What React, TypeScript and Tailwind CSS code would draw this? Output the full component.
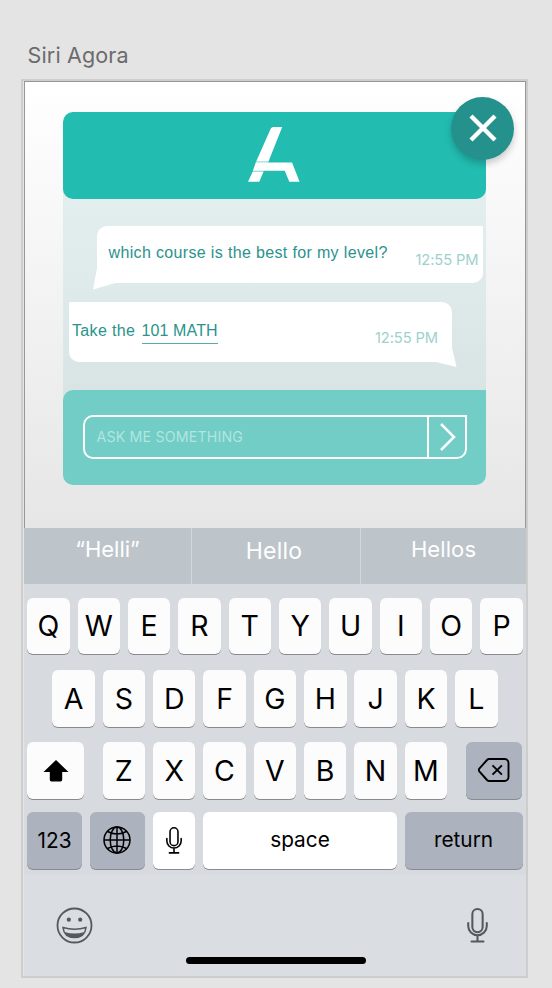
import React from "react";

const INTER = "font-['Inter','Liberation_Sans',sans-serif]";
const HELV = "font-['Liberation_Sans',sans-serif]";

function Key({ children, className = "" }: { children: React.ReactNode; className?: string }) {
  return (
    <div
      className={`flex h-[56.5px] items-center justify-center rounded-[6px] text-black shadow-[0_1px_0_#888a8e] ${className}`}
    >
      {children}
    </div>
  );
}

function LetterKeys({ letters }: { letters: string }) {
  return (
    <>
      {letters.split("").map((l) => (
        <Key key={l} className="w-[42.5px] bg-[#fcfcfc] pt-[1px] text-[28.5px] leading-none">
          {l}
        </Key>
      ))}
    </>
  );
}

function Mic({ className }: { className: string }) {
  return (
    <svg className={className} viewBox="0 0 20 34" fill="none" stroke="currentColor" strokeWidth="2" strokeLinecap="round">
      <rect x="5" y="1" width="10" height="22.5" rx="5" />
      <path d="M1 14.5v3a9 9 0 0 0 18 0v-3M10 26.5v6M4.2 32.6h11.6" />
    </svg>
  );
}

function TimeStamp({ className = "" }: { className?: string }) {
  return (
    <span className={`whitespace-nowrap text-[14.7px] leading-[18px] tracking-[-0.1px] text-[#9dd1cd] ${INTER} ${className}`}>
      12:55 PM
    </span>
  );
}

export default function App() {
  return (
    <div className={`h-[988px] w-[552px] overflow-hidden bg-[#e4e4e4] pt-[41px] ${INTER}`}>
      <div className="h-[38px] pl-[27.5px] text-[21.5px] leading-[28px] tracking-[0.15px] text-[#6b6b6b]">Siri Agora</div>

      <div className="ml-[21px] h-[899px] w-[507px] border-2 border-[#cdcdcd] pl-px">
        <div className="flex h-[895px] w-[502px] flex-col">
          <div className="h-[447px] border border-b-0 border-[#979797] bg-gradient-to-b from-white to-[#e6e6e6] pl-[38.4px] pt-[30px]">
            <div className="relative flex h-[373px] w-[422.4px] flex-col">
              <header className="relative z-10 flex h-[87px] items-start justify-center rounded-[10px] bg-[#22bcb1] pr-[2px] pt-[15px]">
                <svg className="h-[56px] w-[52px]" viewBox="0 0 52 56" fill="white">
                  <path opacity=".55" d="M8.4 34H20.7L20 36H7.6ZM5.2 43.4H16L15.2 45.4H4.3Z" />
                  <path d="M25.5 0H34.2L20.6 34.3H8.3L22.8 1.6Q23.6 0 25.5 0ZM7.8 35.4H44L51.6 54.7H41.3L36.7 43.8H4.9ZM4.5 44.9H15.4L11.3 54.7H0Z" />
                </svg>
              </header>
              <button className="absolute left-[387.6px] top-[-15px] z-20 flex size-[63px] items-center justify-center rounded-full bg-[#24918d] shadow-[0_4px_7px_rgba(0,0,0,0.2)]">
                <svg className="mb-[2px] ml-[1px] size-[28px]" viewBox="0 0 28 28" stroke="white" strokeWidth="4.4">
                  <path d="M2 2 26 26M26 2 2 26" />
                </svg>
              </button>

              <div className={`-my-[10px] flex h-[211px] flex-col bg-[#1b9990]/10 pt-[10px] text-[16px] leading-[20px] tracking-[0.35px] text-[#2a938c] ${HELV}`}>
                <div className="relative ml-[33.6px] mt-[27px] flex h-[57px] w-[386px] rounded-[10px] rounded-tr-[1px] bg-white pl-[11.5px] pt-[17px]">
                  <svg className="absolute left-[-4px] top-[42px] h-[22px] w-[24px]" viewBox="0 0 24 22" fill="white">
                    <path d="M4 0 0 21.5 24 14.5V0Z" />
                  </svg>
                  <span className="relative w-[307px] whitespace-nowrap">which course is the best for my level?</span>
                  <TimeStamp className="mt-[8px]" />
                </div>
                <div className="relative ml-[5.6px] mt-[19px] flex h-[60px] w-[383px] rounded-[10px] rounded-tl-[1px] bg-white pl-[3px] pt-[19px]">
                  <svg className="absolute left-[367px] top-[40px] h-[25px] w-[21px]" viewBox="0 0 21 25" fill="white">
                    <path d="M16 6 20.5 25 0 20V6Z" />
                  </svg>
                  <span className="relative w-[303px] whitespace-nowrap">
                    Take the{" "}
                    <span className="ml-[1.5px] inline-block h-[23px] border-b border-[#5aaba5] tracking-[0.1px]">101 MATH</span>
                  </span>
                  <TimeStamp className="mt-[8px]" />
                </div>
              </div>

              <footer className="relative z-10 h-[95px] rounded-[10px] rounded-tr-none bg-[#71cdc5] pl-[19.6px] pt-[25px]">
                <div className="flex h-[44px] w-[384px] rounded-[10px] rounded-tr-none border-2 border-white">
                  <div className="flex w-[344px] items-center border-r-[2px] border-white pl-[11.5px] text-[14.2px] tracking-[0.17px] text-[#b3e5e1]">
                    ASK ME SOMETHING
                  </div>
                  <svg className="ml-[10.5px] mt-[6px] h-[28px] w-[17px]" viewBox="0 0 17 28" fill="none" stroke="white" strokeWidth="2.5">
                    <path d="M2 1 15 14 2 27" />
                  </svg>
                </div>
              </footer>
            </div>
          </div>

          <div className="flex h-[56px] bg-[#bdc4ca] text-center text-[22px] leading-[28px] text-white">
            <div className="w-[168px] border-r border-[#d3d7db] pt-[7px]">“Helli”</div>
            <div className="w-[169px] border-r border-[#d3d7db] pr-[4px] pt-[9px] text-[23px] tracking-[0.2px]">Hello</div>
            <div className="w-[165px] pt-[7px] tracking-[0.1px]">Hellos</div>
          </div>

          <div className="h-[291px] bg-[#d7dbe0] pt-[13.5px]">
            <div className="flex h-[72.5px] gap-[7.85px] pl-[3.2px]">
              <LetterKeys letters="QWERTYUIOP" />
            </div>
            <div className="flex h-[72px] gap-[7.85px] pl-[28.3px]">
              <LetterKeys letters="ASDFGHJKL" />
            </div>
            <div className="flex h-[70px] gap-[7.85px] pl-[3.2px]">
              <Key className="mr-[10.5px] w-[57px] bg-[#fcfcfc] pt-[1px]">
                <svg className="h-[22px] w-[26px]" viewBox="0 0 26 22">
                  <path d="M13 0 25.5 12H19.2V19.8Q19.2 21.5 17.5 21.5H8.5Q6.8 21.5 6.8 19.8V12H.5Z" />
                </svg>
              </Key>
              <LetterKeys letters="ZXCVBNM" />
              <Key className="ml-[10.8px] w-[56.5px] bg-[#acb2be]">
                <svg className="h-[24px] w-[32px]" viewBox="0 0 32 24" fill="none" stroke="black" strokeWidth="1.9" strokeLinejoin="round">
                  <path d="M11 1H26.5A4 4 0 0 1 30.5 5V19A4 4 0 0 1 26.5 23H11Q10 23 9 22L1.3 13.3Q.3 12 1.3 10.7L9 2Q10 1 11 1Z" />
                  <path d="M14.5 7.3 23.9 16.7M23.9 7.3 14.5 16.7" />
                </svg>
              </Key>
            </div>
            <div className="flex h-[63px] gap-[8px] pl-[3px] text-[20.8px]">
              <Key className="w-[55px] bg-[#acb2be] pt-[1px]">123</Key>
              <Key className="w-[55px] bg-[#acb2be] pr-[1px]">
                <svg className="size-[28px]" viewBox="0 0 28 28" fill="none" stroke="black" strokeWidth="1.5">
                  <circle cx="14" cy="14" r="13" />
                  <ellipse cx="14" cy="14" rx="6.8" ry="13" />
                  <path d="M14 1V27M1 14H27M4.5 5.5Q14 10.5 23.5 5.5M4.5 22.5Q14 17.5 23.5 22.5" />
                </svg>
              </Key>
              <Key className="w-[42px] bg-white">
                <Mic className="h-[27px] w-[16px]" />
              </Key>
              <Key className="w-[194px] bg-white pb-[1px]">space</Key>
              <Key className="w-[118px] bg-[#acb2be] pb-[1px] pr-[1px]">return</Key>
            </div>
          </div>

          <div className="h-[101px] bg-[#dadde2] pt-[32px] text-[#55585d]">
            <div className="flex h-[54px] justify-between pl-[32.4px] pr-[38px]">
              <svg className="size-[37px]" viewBox="0 0 37 37" fill="none" stroke="currentColor" strokeWidth="1.8">
                <circle cx="18.5" cy="18.5" r="17" />
                <circle cx="12.8" cy="12.7" r="2.1" fill="currentColor" stroke="none" />
                <circle cx="24.2" cy="12.7" r="2.1" fill="currentColor" stroke="none" />
                <path d="M7 20.5Q18.5 24 30 20.5Q29 30.5 18.5 30.5Q8 30.5 7 20.5Z" strokeWidth="1.5" />
                <path d="M8.5 25Q18.5 28 28.5 25Q26 30.5 18.5 30.5Q11 30.5 8.5 25Z" fill="currentColor" stroke="none" />
              </svg>
              <Mic className="mt-[1px] h-[35px] w-[21px]" />
            </div>
            <div className="-mt-[4px] ml-[162.4px] h-[7px] w-[180px] rounded-full bg-black" />
          </div>
        </div>
      </div>
    </div>
  );
}
